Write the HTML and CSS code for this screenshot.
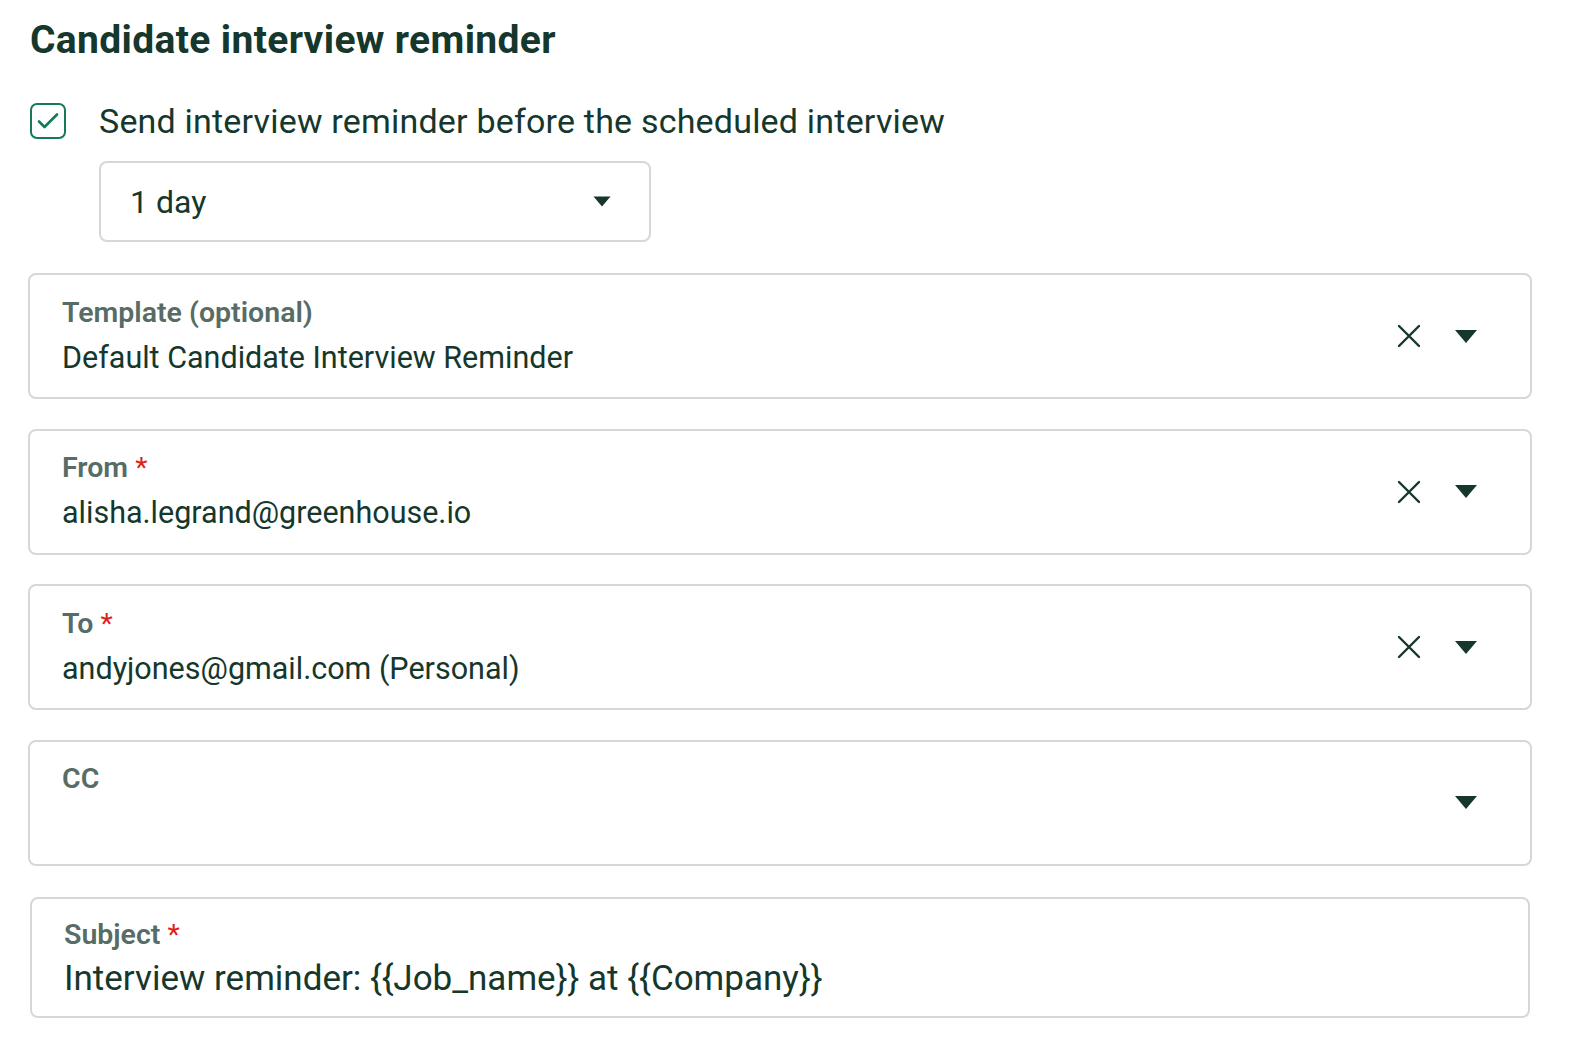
FILE: index.html
```html
<!DOCTYPE html>
<html lang="en">
<head>
<meta charset="utf-8">
<title>Candidate interview reminder</title>
<link rel="stylesheet" href="styles.css">
</head>
<body>
<main class="page">
  <h1 class="title">Candidate interview reminder</h1>

  <div class="check-row">
    <span class="checkbox">
      <svg viewBox="0 0 26 26" width="26" height="26"><path d="M4 13.5l5.5 5.5L22 6.5" fill="none" stroke="#157a58" stroke-width="2.6" stroke-linecap="round" stroke-linejoin="round"/></svg>
    </span>
    <span class="check-label">Send interview reminder before the scheduled interview</span>
  </div>

  <div class="select">
    <span class="select-value">1 day</span>
    <svg class="caret small" viewBox="0 0 18 11" width="18" height="11"><path d="M0.5 0.5h17L9 10.5z" fill="#15372c"/></svg>
  </div>

  <div class="fields">
    <div class="field">
      <div class="field-body">
        <div class="field-label">Template (optional)</div>
        <div class="field-value">Default Candidate Interview Reminder</div>
      </div>
      <div class="field-icons">
        <svg class="clear" viewBox="0 0 24 24" width="24" height="24"><path d="M2 2L22 22M22 2L2 22" stroke="#15372c" stroke-width="2.4" stroke-linecap="round"/></svg>
        <svg class="caret" viewBox="0 0 22 13" width="22" height="13"><path d="M0 0h22L11 13z" fill="#15372c"/></svg>
      </div>
    </div>

    <div class="field">
      <div class="field-body">
        <div class="field-label">From <span class="req">*</span></div>
        <div class="field-value">alisha.legrand@greenhouse.io</div>
      </div>
      <div class="field-icons">
        <svg class="clear" viewBox="0 0 24 24" width="24" height="24"><path d="M2 2L22 22M22 2L2 22" stroke="#15372c" stroke-width="2.4" stroke-linecap="round"/></svg>
        <svg class="caret" viewBox="0 0 22 13" width="22" height="13"><path d="M0 0h22L11 13z" fill="#15372c"/></svg>
      </div>
    </div>

    <div class="field">
      <div class="field-body">
        <div class="field-label">To <span class="req">*</span></div>
        <div class="field-value">andyjones@gmail.com (Personal)</div>
      </div>
      <div class="field-icons">
        <svg class="clear" viewBox="0 0 24 24" width="24" height="24"><path d="M2 2L22 22M22 2L2 22" stroke="#15372c" stroke-width="2.4" stroke-linecap="round"/></svg>
        <svg class="caret" viewBox="0 0 22 13" width="22" height="13"><path d="M0 0h22L11 13z" fill="#15372c"/></svg>
      </div>
    </div>

    <div class="field">
      <div class="field-body">
        <div class="field-label">CC</div>
        <div class="field-value">&nbsp;</div>
      </div>
      <div class="field-icons">
        <svg class="caret" viewBox="0 0 22 13" width="22" height="13"><path d="M0 0h22L11 13z" fill="#15372c"/></svg>
      </div>
    </div>

    <div class="field subject">
      <div class="field-body">
        <div class="field-label">Subject <span class="req">*</span></div>
        <div class="field-value">Interview reminder: {{Job_name}} at {{Company}}</div>
      </div>
    </div>
  </div>
</main>
</body>
</html>
```

FILE: styles.css
```css
* { box-sizing: border-box; }

html, body {
  margin: 0;
  background: #ffffff;
}

body {
  font-family: Roboto, "Liberation Sans", Arial, sans-serif;
  color: #15372c;
}

.page {
  padding: 15px 38px 0 28px;
  width: 1570px;
}

.title {
  margin: 0 0 0 2px;
  font-size: 39px;
  letter-spacing: 0.35px;
  line-height: 50px;
  font-weight: 700;
  color: #15372c;
}

.check-row {
  display: flex;
  align-items: center;
  gap: 33px;
  margin: 38px 0 0 2px;
  height: 36px;
}

.checkbox {
  width: 36px;
  height: 36px;
  border: 2.5px solid #157a58;
  border-radius: 7px;
  display: flex;
  align-items: center;
  justify-content: center;
}

.check-label {
  font-size: 34px;
  letter-spacing: 0.2px;
  line-height: 36px;
}

.select {
  margin: 22px 0 0 71px;
  width: 552px;
  height: 81px;
  border: 2px solid #d3d9d7;
  border-radius: 8px;
  display: flex;
  align-items: center;
  justify-content: space-between;
  padding: 0 38px 0 29px;
}

.select-value {
  font-size: 32px;
}

.fields {
  margin-top: 31px;
  display: flex;
  flex-direction: column;
  gap: 29.5px;
}

.field {
  height: 126px;
  border: 2px solid #d3d9d7;
  border-radius: 8px;
  display: flex;
  align-items: center;
  padding: 0 53px 0 32px;
}

.field-body {
  flex: 1;
}

.field-label {
  font-size: 28.5px;
  line-height: 32px;
  font-weight: 600;
  color: #566c65;
}

.req {
  color: #e0201c;
  font-weight: 400;
}

.field-value {
  margin-top: 11px;
  font-size: 30.5px;
  line-height: 36px;
  color: #15372c;
}

.field-icons {
  display: flex;
  align-items: center;
  gap: 34px;
}

.subject {
  height: 121px;
  margin: 2px 2px 0 2px;
}

.subject .field-value {
  font-size: 35px;
  margin-top: 10px;
}
```
